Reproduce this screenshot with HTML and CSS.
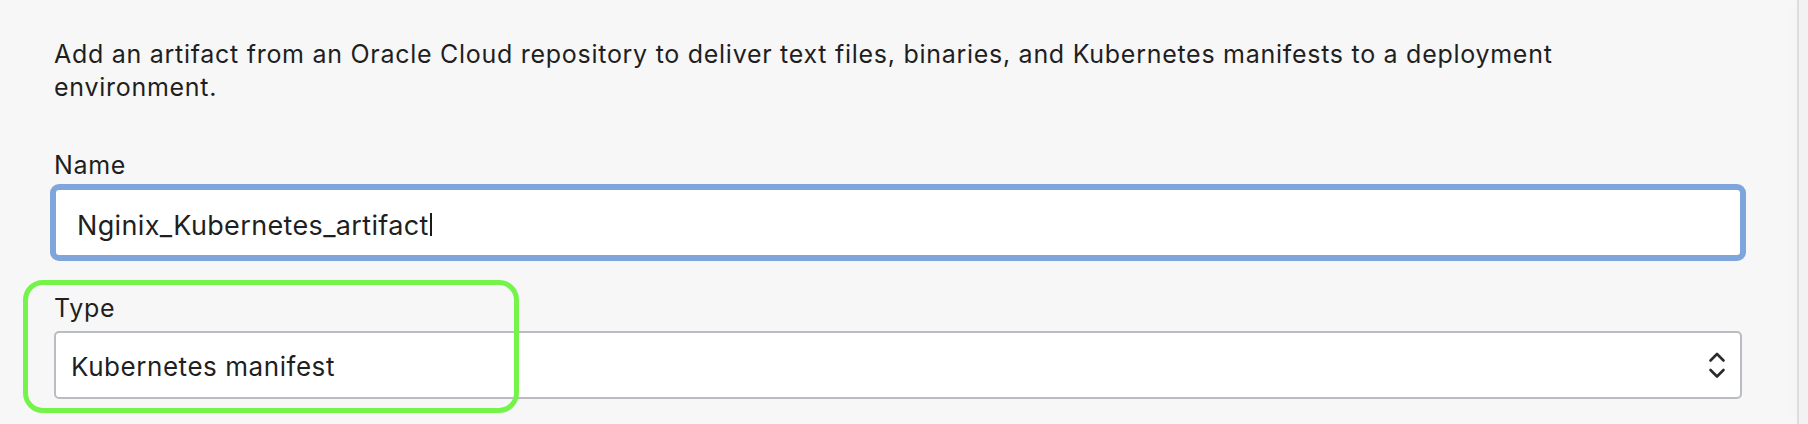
FILE: index.html
```html
<!DOCTYPE html>
<html lang="en">
<head>
<meta charset="utf-8">
<title>Add artifact</title>
<link rel="stylesheet" href="styles.css">
</head>
<body>
<div class="page">
  <main class="form">
    <p class="intro">Add an artifact from an Oracle Cloud repository to deliver text files, binaries, and Kubernetes manifests to a deployment environment.</p>
    <div class="field field-name">
      <label class="label">Name</label>
      <div class="input focused"><span class="value">Nginix_Kubernetes_artifact</span><span class="caret"></span></div>
    </div>
    <div class="field field-type">
      <label class="label">Type</label>
      <div class="select">
        <span class="value">Kubernetes manifest</span>
        <svg class="chevrons" width="18" height="30" viewBox="0 0 18 30" aria-hidden="true">
          <path d="M2.5 10.5 L9 4 L15.5 10.5" fill="none" stroke="#2b2b2b" stroke-width="2.6" stroke-linecap="round" stroke-linejoin="round"/>
          <path d="M2.5 20 L9 26.5 L15.5 20" fill="none" stroke="#2b2b2b" stroke-width="2.6" stroke-linecap="round" stroke-linejoin="round"/>
        </svg>
      </div>
      <div class="highlight"></div>
    </div>
  </main>
  <div class="scrollbar"></div>
</div>
</body>
</html>
```
FILE: styles.css
```css
html, body {
  margin: 0;
  padding: 0;
}
body {
  background: #f7f7f7;
  font-family: Inter, "Liberation Sans", sans-serif;
  color: #1f1f1f;
}
.page {
  display: flex;
  height: 424px;
  overflow: hidden;
}
.form {
  flex: 1;
  padding: 38px 55px 0 54px;
}
.intro {
  margin: 0;
  font-size: 25px;
  line-height: 33px;
  letter-spacing: 0.72px;
  max-width: 1640px;
}
.field {
  display: flex;
  flex-direction: column;
}
.field-name {
  margin-top: 45px;
}
.field-type {
  margin-top: 35px;
  position: relative;
}
.label {
  font-size: 25px;
  line-height: 32px;
  letter-spacing: 0.7px;
  margin-bottom: 7px;
}
.input {
  height: 69px;
  box-sizing: border-box;
  border: 2px solid #7ea6dc;
  border-radius: 5px;
  background: #fff;
  box-shadow: 0 0 0 4px #7ea6dc;
  display: flex;
  align-items: center;
  padding: 5px 0 0 21px;
  font-size: 27px;
  letter-spacing: 0.35px;
}
.caret {
  display: inline-block;
  width: 2px;
  height: 23px;
  background: #1a1a1a;
  margin-left: 1px;
  margin-top: -2px;
}
.select {
  height: 68px;
  box-sizing: border-box;
  border: 2px solid #b9bcc0;
  border-radius: 5px;
  background: #fff;
  display: flex;
  align-items: center;
  justify-content: space-between;
  padding: 0 14px 0 15px;
  font-size: 26px;
  letter-spacing: 0.55px;
}
.select .value {
  padding-top: 3px;
}
.chevrons {
  display: block;
}
.highlight {
  position: absolute;
  left: -31px;
  top: -12px;
  width: 496px;
  height: 133px;
  box-sizing: border-box;
  border: 5px solid #74f34b;
  border-radius: 20px;
  pointer-events: none;
}
.scrollbar {
  width: 9px;
  flex: none;
  background: #f2f2f2;
  border-left: 2px solid #dedede;
  box-shadow: -6px 0 8px -4px rgba(0, 0, 0, 0.04);
}
```
